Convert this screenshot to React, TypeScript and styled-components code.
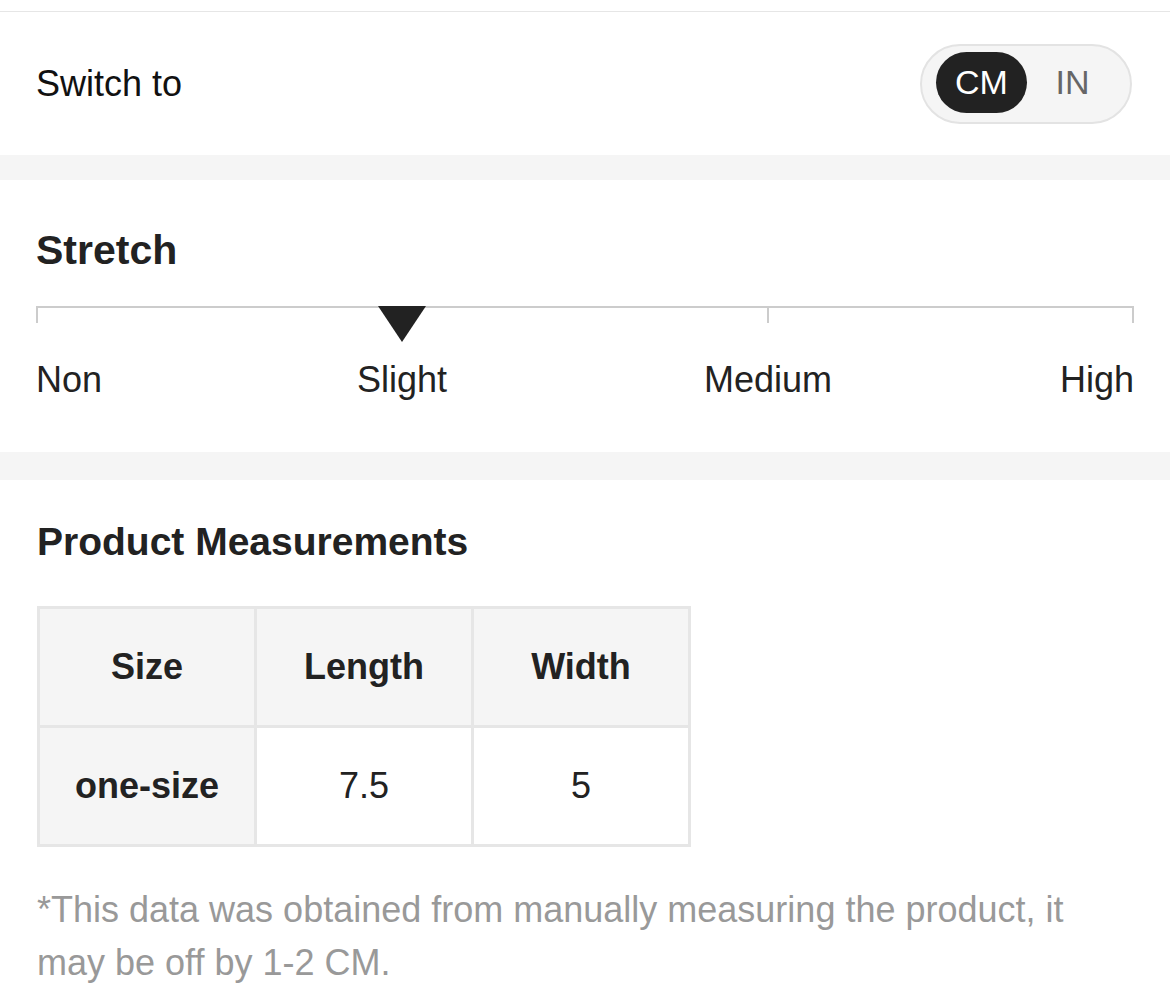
import React from "react";
import styled, { createGlobalStyle } from "styled-components";

const Global = createGlobalStyle`
  html, body { margin: 0; padding: 0; background: #fff; overflow: hidden; }
  body { font-family: "Liberation Sans", Arial, Helvetica, sans-serif; -webkit-font-smoothing: antialiased; }
  * { box-sizing: border-box; }
`;

const Page = styled.div`
  width: 1170px;
  display: flex;
  flex-direction: column;
`;

const TopEdge = styled.div`
  height: 12px;
  border-bottom: 1px solid #e6e6e6;
`;

const SwitchRow = styled.div`
  height: 143px;
  display: flex;
  align-items: center;
  justify-content: space-between;
  padding: 0 38px 0 36px;
`;

const SwitchLabel = styled.span`
  font-size: 36px;
  color: #111;
`;

const Toggle = styled.div`
  width: 212px;
  height: 80px;
  border: 2px solid #e3e3e3;
  background: #f5f5f5;
  border-radius: 40px;
  display: flex;
  align-items: center;
  padding: 0 12px 2px 14px;
`;

const ToggleOption = styled.div<{ $active?: boolean }>`
  width: 91px;
  height: 61px;
  border-radius: 31px;
  display: flex;
  align-items: center;
  justify-content: center;
  font-size: 34px;
  background: ${(p) => (p.$active ? "#222" : "transparent")};
  color: ${(p) => (p.$active ? "#fff" : "#666")};
`;

const Band = styled.div<{ $h: number }>`
  height: ${(p) => p.$h}px;
  background: #f5f5f5;
`;

const StretchSection = styled.section`
  padding: 50px 36px 54px 36px;
  display: flex;
  flex-direction: column;
`;

const SectionTitle = styled.h2<{ $size: number }>`
  margin: 0;
  font-size: ${(p) => p.$size}px;
  line-height: ${(p) => p.$size}px;
  font-weight: 700;
  color: #222;
`;

const ScaleSvg = styled.svg`
  display: block;
  margin-top: 35px;
  width: 1098px;
  height: 36px;
`;

const ScaleLabels = styled.div`
  margin-top: 20px;
  display: grid;
  grid-template-columns: repeat(6, 1fr);
  width: 1098px;
`;

const ScaleLabel = styled.span<{ $col: string; $align: string }>`
  grid-column: ${(p) => p.$col};
  justify-self: ${(p) => p.$align};
  font-size: 36px;
  line-height: 36px;
  color: #222;
`;

const MeasureSection = styled.section`
  padding: 42px 36px 0 37px;
  display: flex;
  flex-direction: column;
`;

const Table = styled.div`
  margin-top: 45px;
  display: grid;
  grid-template-columns: repeat(3, 214px);
  grid-auto-rows: 116px;
  gap: 3px;
  padding: 3px;
  background: #e6e6e6;
  width: max-content;
`;

const Cell = styled.div<{ $shade?: boolean; $bold?: boolean }>`
  display: flex;
  align-items: center;
  justify-content: center;
  background: ${(p) => (p.$shade ? "#f5f5f5" : "#fff")};
  font-size: 36px;
  font-weight: ${(p) => (p.$bold ? 700 : 400)};
  color: #222;
`;

const Note = styled.p`
  margin: 36px 0 0 0;
  font-size: 36px;
  line-height: 53px;
  color: #999;
  width: 1060px;
`;

export default function App() {
  const ticks = [1, 366, 732, 1097];
  return (
    <Page>
      <Global />
      <TopEdge />
      <SwitchRow>
        <SwitchLabel>Switch to</SwitchLabel>
        <Toggle>
          <ToggleOption $active>CM</ToggleOption>
          <ToggleOption>IN</ToggleOption>
        </Toggle>
      </SwitchRow>
      <Band $h={25} />
      <StretchSection>
        <SectionTitle $size={41}>Stretch</SectionTitle>
        <ScaleSvg viewBox="0 0 1098 36">
          <line x1="0" y1="1" x2="1098" y2="1" stroke="#cccccc" strokeWidth="2" />
          {ticks.map((x) => (
            <line key={x} x1={x} y1="0" x2={x} y2="17" stroke="#cccccc" strokeWidth="2" />
          ))}
          <polygon points="342,0 390,0 366,36" fill="#222" />
        </ScaleSvg>
        <ScaleLabels>
          <ScaleLabel $col="1 / 2" $align="start">Non</ScaleLabel>
          <ScaleLabel $col="2 / 4" $align="center">Slight</ScaleLabel>
          <ScaleLabel $col="4 / 6" $align="center">Medium</ScaleLabel>
          <ScaleLabel $col="6 / 7" $align="end">High</ScaleLabel>
        </ScaleLabels>
      </StretchSection>
      <Band $h={28} />
      <MeasureSection>
        <SectionTitle $size={39}>Product Measurements</SectionTitle>
        <Table>
          <Cell $shade $bold>Size</Cell>
          <Cell $shade $bold>Length</Cell>
          <Cell $shade $bold>Width</Cell>
          <Cell $shade $bold>one-size</Cell>
          <Cell>7.5</Cell>
          <Cell>5</Cell>
        </Table>
        <Note>*This data was obtained from manually measuring the product, it may be off by 1-2 CM.</Note>
      </MeasureSection>
    </Page>
  );
}
